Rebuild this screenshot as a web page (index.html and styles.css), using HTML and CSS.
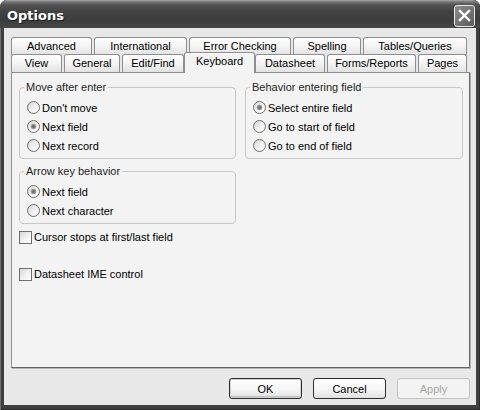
FILE: index.html
```html
<!DOCTYPE html>
<html>
<head>
<meta charset="utf-8">
<title>Options</title>
<link rel="stylesheet" href="styles.css">
</head>
<body>
<div class="window">
  <div class="titlebar">
    <span class="title">Options</span>
    <span class="close"><svg width="13" height="13" viewBox="0 0 13 13"><path d="M2 2L11 11M11 2L2 11" stroke="#fff" stroke-width="2.4" stroke-linecap="square" fill="none"/></svg></span>
  </div>
  <div class="client">
    <div class="tabrow back">
      <div class="tab t-advanced">Advanced</div>
      <div class="tab t-international">International</div>
      <div class="tab t-errors">Error Checking</div>
      <div class="tab t-spelling">Spelling</div>
      <div class="tab t-tables">Tables/Queries</div>
    </div>
    <div class="tabrow front">
      <div class="tab t-view">View</div>
      <div class="tab t-general">General</div>
      <div class="tab t-editfind">Edit/Find</div>
      <div class="tab t-keyboard selected">Keyboard</div>
      <div class="tab t-datasheet">Datasheet</div>
      <div class="tab t-forms">Forms/Reports</div>
      <div class="tab t-pages">Pages</div>
    </div>
    <div class="panel">
      <div class="columns">
        <div class="column left">
          <fieldset class="group">
            <legend>Move after enter</legend>
            <div class="option"><span class="radio"></span>Don't move</div>
            <div class="option"><span class="radio checked"></span>Next field</div>
            <div class="option"><span class="radio"></span>Next record</div>
          </fieldset>
          <fieldset class="group">
            <legend>Arrow key behavior</legend>
            <div class="option"><span class="radio checked"></span>Next field</div>
            <div class="option"><span class="radio"></span>Next character</div>
          </fieldset>
        </div>
        <div class="column right">
          <fieldset class="group">
            <legend>Behavior entering field</legend>
            <div class="option"><span class="radio checked"></span>Select entire field</div>
            <div class="option"><span class="radio"></span>Go to start of field</div>
            <div class="option"><span class="radio"></span>Go to end of field</div>
          </fieldset>
        </div>
      </div>
      <div class="check first"><span class="box"></span>Cursor stops at first/last field</div>
      <div class="check second"><span class="box"></span>Datasheet IME control</div>
    </div>
    <div class="buttons">
      <div class="btn default">OK</div>
      <div class="btn">Cancel</div>
      <div class="btn disabled">Apply</div>
    </div>
  </div>
</div>
</body>
</html>
```
FILE: styles.css
```css
html, body {
  margin: 0;
  background: #fff;
}
body {
  font-family: "Liberation Sans", Arial, sans-serif;
  font-size: 11px;
  color: #000;
}
.window {
  width: 480px;
  height: 410px;
  box-sizing: border-box;
  display: flex;
  flex-direction: column;
  padding: 0 4px 5px;
  background: #3f3f3f;
  border-radius: 7px 7px 0 0;
  overflow: hidden;
  box-shadow: inset 1px 0 #707070, inset -1px 0 #2e2e2e, inset 0 -1px #2a2a2a;
}
.titlebar {
  height: 28px;
  margin: 0 -4px;
  padding: 0 5px 0 7px;
  display: flex;
  align-items: center;
  justify-content: space-between;
  background: linear-gradient(#a8a8a8 0, #747474 2px, #525252 5px, #424242 12px, #3c3c3c 20px, #474747 28px);
  border-radius: 7px 7px 0 0;
}
.title {
  font-family: "DejaVu Sans", sans-serif;
  font-weight: bold;
  font-size: 13px;
  color: #fff;
  padding-top: 3px;
  text-shadow: 1px 1px #1e1e1e;
}
.close {
  width: 19px;
  height: 20px;
  margin-top: 3px;
  border: 1px solid #e8e8e8;
  border-radius: 3px;
  background: linear-gradient(135deg, #8e8e8e, #5a5a5a);
  display: flex;
  align-items: center;
  justify-content: center;
}
.client {
  flex: 1;
  background: #e8e8e8;
  padding: 9px 6px 6px 7px;
  display: flex;
  flex-direction: column;
}
.tabrow {
  display: flex;
  gap: 2px;
  height: 18px;
}
.tabrow.front {
  margin-top: -1px;
}
.tab {
  flex: none;
  box-sizing: border-box;
  height: 18px;
  border: 1px solid #8e8e8e;
  border-bottom: none;
  border-radius: 3px 3px 0 0;
  background: linear-gradient(#fefefe, #f3f3f3 50%, #e2e2e2);
  text-align: center;
  line-height: 17px;
  white-space: nowrap;
}
.t-advanced { width: 81px; }
.t-international { width: 93px; }
.t-errors { width: 102px; }
.t-spelling { width: 68px; }
.t-tables { width: 104px; }
.t-view { width: 51px; }
.t-general { width: 56px; }
.t-editfind { width: 62px; }
.t-keyboard { width: 71px; }
.t-datasheet { width: 70px; }
.t-forms { width: 89px; }
.t-pages { width: 49px; }
.tab.selected {
  position: relative;
  z-index: 2;
  margin: -2px -2px 0;
  height: 21px;
  line-height: 17px;
  background: #f3f3f3;
  box-shadow: inset 0 1px #fff;
}
.panel {
  height: 296px;
  box-sizing: border-box;
  padding: 8px 6px 0 7px;
  background: #f3f3f3;
  border: 1px solid #8e8e8e;
  border-right-color: #666;
  border-bottom-color: #666;
  box-shadow: 1px 1px 0 #b5b5b5;
}
.columns {
  display: flex;
  align-items: flex-start;
  gap: 9px;
}
.column {
  display: flex;
  flex-direction: column;
  gap: 6px;
}
.column.left { width: 217px; }
.column.right { width: 218px; }
.group {
  margin: 0;
  min-width: 0;
  padding: 4px 0 3px 7px;
  border: 1px solid #c8c8c8;
  border-radius: 4px;
}
legend {
  padding: 0 2px;
  margin-left: -3px;
  line-height: 13px;
  color: #1e1e1e;
}
.option {
  display: flex;
  align-items: center;
  gap: 2px;
  height: 19px;
}
.radio {
  width: 13px;
  height: 13px;
  box-sizing: border-box;
  border: 1px solid #6e6e6e;
  border-radius: 50%;
  background: linear-gradient(135deg, #d6d6d6, #f4f4f4 60%, #fff);
}
.radio.checked {
  background: radial-gradient(circle, #6a6a6a 0, #7e7e7e 1.5px, #a2a2a2 2.5px, transparent 3.2px), linear-gradient(135deg, #d6d6d6, #f4f4f4 60%, #fff);
}
.check {
  display: flex;
  align-items: center;
  gap: 2px;
  height: 16px;
}
.check.first { margin-top: 5px; }
.check.second { margin-top: 21px; }
.box {
  width: 13px;
  height: 13px;
  box-sizing: border-box;
  border: 1px solid #6e6e6e;
  background: linear-gradient(135deg, #d6d6d6, #f4f4f4 60%, #fff);
}
.buttons {
  display: flex;
  justify-content: flex-end;
  gap: 11px;
  margin-top: 10px;
}
.btn {
  width: 73px;
  height: 21px;
  box-sizing: border-box;
  border: 1px solid #2e2e2e;
  border-radius: 3px;
  background: linear-gradient(#fff, #f4f4f4 60%, #e0e0e0);
  display: flex;
  align-items: center;
  justify-content: center;
}
.btn.default {
  box-shadow: inset 0 0 0 1px #d2d2d2, inset 0 -2px 0 0 #bdbdbd;
}
.btn.disabled {
  border-color: #c2c2c2;
  color: #a6a6a6;
  background: #f3f3f3;
}
```
